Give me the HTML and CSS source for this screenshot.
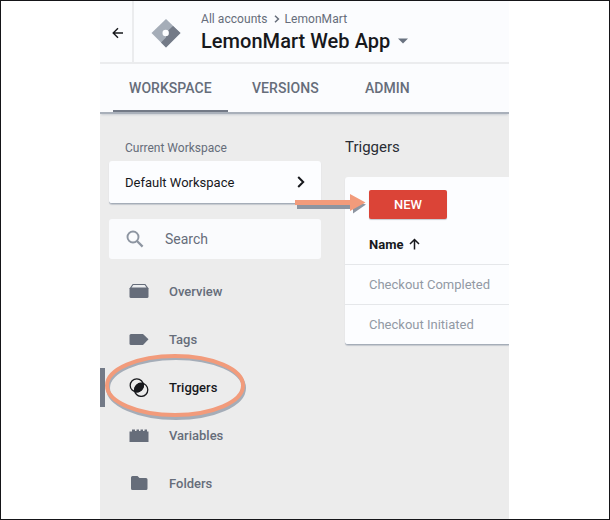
FILE: index.html
```
<!DOCTYPE html>
<html lang="en">
<head>
<meta charset="utf-8">
<title>LemonMart Web App</title>
<link rel="stylesheet" href="styles.css">
</head>
<body>
<div class="app">
  <header class="header">
    <div class="back">
      <svg width="12" height="12" viewBox="0 0 12 12"><path d="M11 6H1.5M6 1.2L1.2 6L6 10.8" fill="none" stroke="#17181c" stroke-width="1.4"/></svg>
    </div>
    <svg class="logo" width="30" height="30" viewBox="0 0 30 30">
      <path d="M15 1L29.5 15L15 29.5L.5 15Z" fill="#a5adb8"/>
      <path d="M22 8L29.5 15L15 29.5L10 24.5L15 19.500V14.500Z" fill="#737a87"/>
      <circle cx="14.7" cy="15" r="3.200" fill="#fcfdff"/>
    </svg>
    <div class="account">
      <div class="crumbs"><span>All accounts</span>
        <svg width="6" height="8" viewBox="0 0 6 8"><path d="M1 .8L4.4 4L1 7.2" fill="none" stroke="#666d7a" stroke-width="1.5"/></svg>
        <span>LemonMart</span></div>
      <div class="title"><span>LemonMart Web App</span>
        <svg width="10" height="6" viewBox="0 0 10 6"><path d="M0 .5H10L5 5.5Z" fill="#697280"/></svg></div>
    </div>
  </header>
  <nav class="tabs">
    <div class="tab active"><span>WORKSPACE</span></div>
    <div class="tab versions"><span>VERSIONS</span></div>
    <div class="tab admin"><span>ADMIN</span></div>
  </nav>
  <div class="content">
    <aside class="sidebar">
      <div class="label"><span>Current Workspace</span></div>
      <div class="workspace"><span>Default Workspace</span>
        <svg width="8" height="12" viewBox="0 0 8 12"><path d="M1.2 1L6.2 6L1.2 11" fill="none" stroke="#17181c" stroke-width="2"/></svg>
      </div>
      <div class="search">
        <svg width="18" height="18" viewBox="0 0 18 18"><circle cx="7" cy="7" r="5.5" fill="none" stroke="#8d95a1" stroke-width="1.9"/><path d="M11 11L16.6 16.6" stroke="#8d95a1" stroke-width="2.3"/></svg>
        <span>Search</span>
      </div>
      <ul class="menu">
        <li><svg width="20" height="20" viewBox="0 0 20 20"><path d="M1.500 7L4 3.500H16L18.500 7Z" fill="#eceef0" stroke="#666d7a" stroke-width="1.2"/><path d="M.5 7H19.500V15.500Q19.500 17 18 17H2Q.5 17 .5 15.500Z" fill="#666d7a"/></svg><span>Overview</span></li>
        <li><svg width="20" height="20" viewBox="0 0 20 20"><path d="M2 5H14L19.500 10.300L14 16H2Q.5 16 .5 14.500V6.500Q.5 5 2 5Z" fill="#666d7a"/></svg><span>Tags</span></li>
        <li class="selected"><svg width="20" height="20" viewBox="0 0 20 20"><circle cx="7.800" cy="8.400" r="6.600" fill="none" stroke="#17181c" stroke-width="1.300"/><circle cx="12.200" cy="12.800" r="6.600" fill="none" stroke="#17181c" stroke-width="1.300"/><path d="M5.900 14.700A6.600 6.600 0 0 1 14.100 6.500A6.600 6.600 0 0 1 5.900 14.700Z" fill="#17181c" stroke="#17181c"/></svg><span>Triggers</span></li>
        <li><svg width="20" height="20" viewBox="0 0 20 20"><path d="M.5 17V6.500H3V4.500H6V6H7.500V4.500H10V6H11.500V4.500H14V6H15.500V4.500H18V6.500H19.500V17Z" fill="#666d7a"/></svg><span>Variables</span></li>
        <li><svg width="20" height="20" viewBox="0 0 20 20"><path d="M3.500 3H8.500L10.500 5H17Q18.500 5 18.500 6.500V15.500Q18.500 17 17 17H3.500Q2 17 2 15.500V4.500Q2 3 3.500 3Z" fill="#666d7a"/></svg><span>Folders</span></li>
      </ul>
    </aside>
    <main class="main">
      <h1><span>Triggers</span></h1>
      <section class="card">
        <button class="new"><span>NEW</span></button>
        <div class="row name"><span>Name</span>
          <svg width="11" height="12" viewBox="0 0 11 12"><path d="M5.500 11.500V1.500M1 6L5.500 1.500L10 6" fill="none" stroke="#17181c" stroke-width="1.500"/></svg></div>
        <div class="row"><span>Checkout Completed</span></div>
        <div class="row"><span>Checkout Initiated</span></div>
      </section>
    </main>
  </div>
</div>
<svg class="annotation" width="610" height="520" viewBox="0 0 610 520">
  <ellipse class="shade" cx="176" cy="388" rx="68" ry="30"/>
  <ellipse class="ring" cx="175" cy="385.500" rx="68" ry="29.500"/>
  <path class="arrow-shade" d="M297 204H351V200L366 204.500L353 213.500V209H297Z"/>
  <path class="arrow" d="M295 200H350V194L365.500 202.500L350 211V205H295Z"/>
</svg>
</body>
</html>
```

FILE: styles.css
```
* { box-sizing: border-box; }
body {
  margin: 0;
  width: 610px;
  height: 520px;
  overflow: hidden;
  background: #fff;
  border: 1px solid #151518;
  font-family: Roboto, sans-serif;
  color: #666d7a;
  position: relative;
}
svg { display: block; flex: none; }
span { white-space: nowrap; }
.app { width: 409px; height: 518px; margin-left: 99px; background: #ececec; overflow: hidden; }
.header { display: flex; height: 63px; background: #fbfcfe; border-bottom: 2px solid #ebecee; }
.back { width: 34px; padding: 26px 0 0 12px; border-right: 2px solid #ebecee; }
.logo { margin: 17px 0 0 17px; }
.account { margin-left: 20px; padding-top: 10px; }
.crumbs { display: flex; align-items: center; height: 16px; font-size: 12px; letter-spacing: 0.05px; }
.crumbs svg { margin: 0 5px 0 6px; }
.title { display: flex; align-items: center; height: 28px; font-size: 20px; font-weight: 500; letter-spacing: 0.04px; color: #17181c; }
.title svg { margin-left: 8px; }
.tabs { display: flex; height: 50px; padding-left: 13px; background: #fbfcfe; border-bottom: 2px solid #a9b0ba; box-shadow: 0 2px 2px -1px #c9cdd3; }
.tab { display: flex; align-items: center; font-size: 14px; font-weight: 500; letter-spacing: 0.05px; }
.tab.active { width: 115px; padding-left: 16px; border-bottom: 2px solid #737a87; padding-top: 2px; }
.versions { width: 112px; padding-left: 24px; }
.admin { padding-left: 25px; }
.content { display: flex; height: 405px; }
.sidebar { width: 245px; padding: 25px 24px 0 0; }
.label { margin-left: 25px; height: 22px; line-height: 19px; font-size: 12px; }
.workspace { display: flex; align-items: center; justify-content: space-between; height: 43px; margin-left: 9px; padding: 0 16px; background: #fcfdff; border-radius: 3px; border-bottom: 1px solid #a5adb8; box-shadow: 0 1px 1px #c5c9cf; color: #17181c; font-size: 13px; }
.search { display: flex; align-items: center; height: 40px; margin: 15px 0 0 9px; padding-left: 17px; gap: 21px; background: #fafbfd; border-radius: 3px; font-size: 14px; }
.menu { list-style: none; margin: 8px 0 0; padding: 0; }
.menu li { display: flex; align-items: center; height: 48px; padding-left: 29px; gap: 20px; font-size: 13px; font-weight: 500; }
.menu .selected { color: #17181c; background: linear-gradient(#737a87, #737a87) 0 5px / 5px 39px no-repeat; }
.main { width: 164px; padding-top: 23px; }
h1 { margin: 0; height: 40px; line-height: 20px; font-size: 15px; font-weight: 400; color: #292c34; }
.card { height: 168px; padding-top: 13px; background: #fcfdff; border-radius: 3px 0 0 3px; border-bottom: 1px solid #a5adb8; box-shadow: 0 1px 1px #c5c9cf; }
.new { display: flex; align-items: center; justify-content: center; width: 78px; height: 29px; margin: 0 0 0 24px; padding: 0; border: 0; border-radius: 2px; background: #db4437; color: #fff; font: 500 13px Roboto, sans-serif; box-shadow: 0 1px 1px #c5c9cf; }
.row { display: flex; align-items: center; height: 40px; padding-left: 24px; color: #9299a4; font-size: 13px; border-top: 1px solid #e5e7ea; }
.row.name { height: 45px; padding-top: 5px; gap: 6px; border: 0; color: #17181c; font-weight: 700; }
.annotation { position: absolute; left: -1px; top: -1px; pointer-events: none; }
.shade { fill: none; stroke: #a5adb8; stroke-width: 4; }
.ring { fill: none; stroke: #f29b7b; stroke-width: 4; }
.arrow-shade { fill: #8d95a1; }
.arrow { fill: #f29b7b; }
```
